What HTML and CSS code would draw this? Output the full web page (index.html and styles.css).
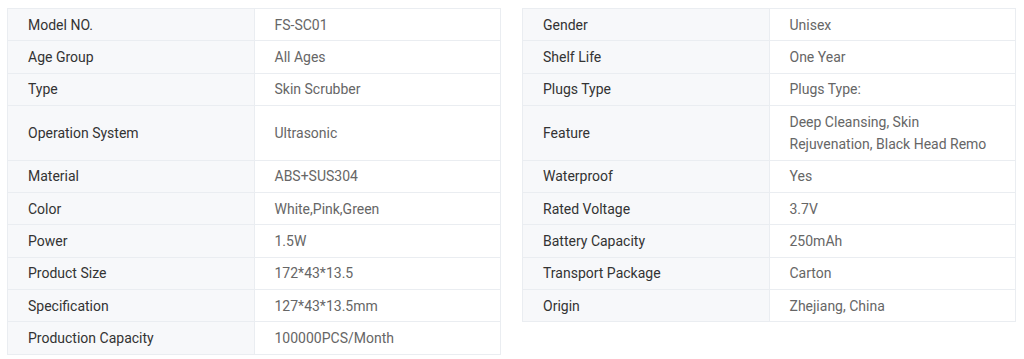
FILE: index.html
```html
<!DOCTYPE html>
<html lang="en">

<head>
    <meta charset="UTF-8">
    <meta name="viewport" content="width=device-width, initial-scale=1.0">
    <title>Product Parameters</title>
    <link rel="stylesheet" href="styles.css">
</head>

<body>

    <div class="spec-wrap">
        <table class="spec-table">
            <tr><td class="spec-label">Model NO.</td><td class="spec-value">FS-SC01</td></tr>
            <tr><td class="spec-label">Age Group</td><td class="spec-value">All Ages</td></tr>
            <tr><td class="spec-label">Type</td><td class="spec-value">Skin Scrubber</td></tr>
            <tr class="tall"><td class="spec-label">Operation System</td><td class="spec-value">Ultrasonic</td></tr>
            <tr><td class="spec-label">Material</td><td class="spec-value">ABS+SUS304</td></tr>
            <tr><td class="spec-label">Color</td><td class="spec-value">White,Pink,Green</td></tr>
            <tr><td class="spec-label">Power</td><td class="spec-value">1.5W</td></tr>
            <tr><td class="spec-label">Product Size</td><td class="spec-value">172*43*13.5</td></tr>
            <tr><td class="spec-label">Specification</td><td class="spec-value">127*43*13.5mm</td></tr>
            <tr><td class="spec-label">Production Capacity</td><td class="spec-value">100000PCS/Month</td></tr>
        </table>

        <table class="spec-table">
            <tr><td class="spec-label">Gender</td><td class="spec-value">Unisex</td></tr>
            <tr><td class="spec-label">Shelf Life</td><td class="spec-value">One Year</td></tr>
            <tr><td class="spec-label">Plugs Type</td><td class="spec-value">Plugs Type:</td></tr>
            <tr class="tall"><td class="spec-label">Feature</td><td class="spec-value">Deep Cleansing, Skin Rejuvenation, Black Head Remo</td></tr>
            <tr><td class="spec-label">Waterproof</td><td class="spec-value">Yes</td></tr>
            <tr><td class="spec-label">Rated Voltage</td><td class="spec-value">3.7V</td></tr>
            <tr><td class="spec-label">Battery Capacity</td><td class="spec-value">250mAh</td></tr>
            <tr><td class="spec-label">Transport Package</td><td class="spec-value">Carton</td></tr>
            <tr><td class="spec-label">Origin</td><td class="spec-value">Zhejiang, China</td></tr>
        </table>
    </div>

</body>

</html>
```

FILE: styles.css
```css
body {
    margin: 0;
    background: #fff;
    font-family: Roboto, "Liberation Sans", sans-serif;
}

.spec-wrap {
    display: flex;
    align-items: flex-start;
    gap: 21px;
    padding: 8px 8px 0 7px;
}

.spec-table {
    flex: 1;
    border-collapse: collapse;
    table-layout: fixed;
    font-size: 14px;
    line-height: 22px;
}

.spec-table td {
    border: 1px solid #eaedf1;
    padding: 4.7px 20px;
    vertical-align: middle;
}

.spec-table .tall td {
    height: 44px;
}

.spec-label {
    width: 50%;
    background: #f7f8fa;
    color: #333;
}

.spec-value {
    color: #666;
    background: #fff;
}
```
